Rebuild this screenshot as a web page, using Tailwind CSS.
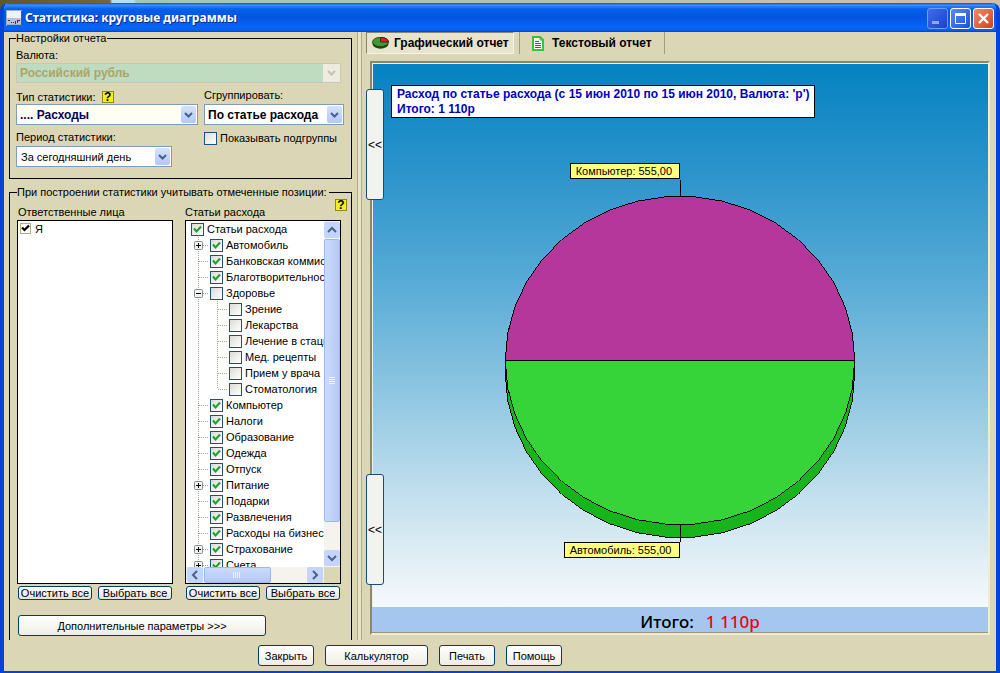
<!DOCTYPE html>
<html lang="ru">
<head>
    <meta charset="UTF-8">
    <meta name="viewport" content="width=device-width, initial-scale=1.0">
    <title>Статистика: круговые диаграммы</title>
    <script src="https://cdn.jsdelivr.net/npm/@tailwindcss/browser@4"></script>
</head>
<body class="h-screen overflow-hidden bg-[linear-gradient(90deg,#5c5a28_0,#6d6a38_110px,#b8dcf4_112px,#b8dcf4_134px,#a9c3b4_136px,#b4c4a8_60%,#cdbfa6_100%)] pt-[3px] font-['Liberation_Sans',Arial,sans-serif] text-[11px] leading-[14px] text-black">
    <div class="flex h-full flex-col overflow-hidden rounded-t-lg border-x-4 border-b-2 border-[#0442d8] bg-[#dbd6b6]">

        <!-- Title bar -->
        <header class="-mx-1 flex h-[29px] shrink-0 items-center gap-[3px] bg-[linear-gradient(180deg,#0a4fd0_0,#3a90fa_2px,#0560ea_6px,#0454e2_14px,#0566fb_24px,#0462f4_27px,#0340c4_29px)] pt-px pr-[6px] pl-[6px]">
            <svg class="size-4" viewBox="0 0 16 16" aria-hidden="true">
                <rect x="0" y="0" width="16" height="16" fill="#9fb0cc" />
                <rect x="1" y="1" width="14" height="7" fill="#eef2fa" />
                <rect x="1" y="8" width="14" height="6" fill="#b9c2d4" />
                <g shape-rendering="crispEdges" fill="#33384c">
                    <rect x="2" y="10" width="2" height="1" /><rect x="5" y="12" width="1" height="1" /><rect x="7" y="12" width="1" height="1" />
                    <rect x="9" y="11" width="1" height="3" /><rect x="11" y="10" width="1" height="3" /><rect x="12" y="10" width="2" height="1" />
                </g>
                <path d="M15.500 1v14.500H1" fill="none" stroke="#4c5670" />
            </svg>
            <h1 class="font-['Noto_Sans','Open_Sans',sans-serif] text-[12px] font-bold text-white [text-shadow:1px_1px_0_#0a2a80]">Статистика: круговые диаграммы</h1>
            <div class="ml-auto flex gap-[2px]">
                <button aria-label="Свернуть" class="size-[21px] rounded-[3px] border border-[#6f9cf6] bg-linear-to-br from-[#3f6ee8] to-[#1c3fcf]">
                    <svg class="size-[19px]" viewBox="0 0 19 19"><rect x="4" y="12" width="7" height="3" fill="#8fa6f2" /></svg>
                </button>
                <button aria-label="Развернуть" class="size-[21px] rounded-[3px] border border-white bg-linear-to-br from-[#5b8cf5] to-[#1c4fdc]">
                    <svg class="size-[19px]" viewBox="0 0 19 19"><path d="M4.500 5v9.500h10V5" fill="none" stroke="#fff" /><rect x="4" y="4" width="11" height="3" fill="#fff" /></svg>
                </button>
                <button aria-label="Закрыть окно" class="size-[21px] rounded-[3px] border border-white bg-linear-to-br from-[#ee8a68] to-[#d0401c]">
                    <svg class="size-[19px]" viewBox="0 0 19 19"><path d="M5 5l9 9M14 5l-9 9" stroke="#fff" stroke-width="2.400" /></svg>
                </button>
            </div>
        </header>

        <main class="flex min-h-0 flex-1">
            <!-- Settings -->
            <div class="flex w-[348px] shrink-0 flex-col gap-[7px] pl-[5px]">
                <fieldset class="h-[147px] shrink-0 border border-black pr-[7px] pl-[6px]">
                    <legend class="pr-px leading-[13px]">Настройки отчета</legend>
                    <label for="currency" class="mt-[3px] block leading-[15px]">Валюта:</label>
                    <div class="relative mr-[3px] flex">
                        <select id="currency" disabled class="h-5 w-full appearance-none border border-[#cbc7b4] bg-[#bfdcc1] px-[3px] text-[12px] font-bold text-[#aca468] opacity-100">
                            <option>Российский рубль</option>
                        </select>
                        <svg class="pointer-events-none absolute top-px right-px h-[18px] w-[17px] bg-[#eeece0]" viewBox="0 0 17 18"><path d="M5 7l3.500 3.500L12 7" fill="none" stroke="#c4c2b4" stroke-width="2" /></svg>
                    </div>
                    <div class="mt-[5px] flex gap-[6px]">
                        <div class="w-[182px]">
                            <div class="flex h-4 items-end gap-[6px]">
                                <label for="kind">Тип статистики:</label>
                                <button aria-label="Справка по типу" class="mb-px size-3 border border-[#8a8a20] bg-[#f4f01c] text-[12px] leading-[10px] font-bold">?</button>
                            </div>
                            <div class="relative flex">
                                <select id="kind" class="h-[21px] w-full appearance-none border border-[#7f9db9] bg-[#fffef2] px-[3px] text-[12px] font-bold text-[#000060]">
                                    <option>.... Расходы</option>
                                </select>
                                <svg class="pointer-events-none absolute top-0.5 right-0.5 h-[17px] w-[15px] rounded-xs bg-linear-to-b from-[#d6e2fd] to-[#b3c8f8]" viewBox="0 0 15 17"><path d="M4 7l3.500 3.500L11 7" fill="none" stroke="#45608c" stroke-width="2" /></svg>
                            </div>
                            <label for="period" class="mt-[5px] mb-[2px] block">Период статистики:</label>
                            <div class="relative flex w-[156px]">
                                <select id="period" class="h-[21px] w-full appearance-none border border-[#7f9db9] bg-white px-1">
                                    <option>За сегодняшний день</option>
                                </select>
                                <svg class="pointer-events-none absolute top-0.5 right-0.5 h-[17px] w-[15px] rounded-xs bg-linear-to-b from-[#d6e2fd] to-[#b3c8f8]" viewBox="0 0 15 17"><path d="M4 7l3.500 3.500L11 7" fill="none" stroke="#45608c" stroke-width="2" /></svg>
                            </div>
                        </div>
                        <div class="flex-1">
                            <label for="group" class="block h-4">Сгруппировать:</label>
                            <div class="relative flex">
                                <select id="group" class="h-[21px] w-full appearance-none border border-[#7f9db9] bg-white px-[3px] text-[12px] font-bold">
                                    <option>По статье расхода</option>
                                </select>
                                <svg class="pointer-events-none absolute top-0.5 right-0.5 h-[17px] w-[15px] rounded-xs bg-linear-to-b from-[#d6e2fd] to-[#b3c8f8]" viewBox="0 0 15 17"><path d="M4 7l3.500 3.500L11 7" fill="none" stroke="#45608c" stroke-width="2" /></svg>
                            </div>
                            <label class="mt-[6px] flex items-center gap-[3px] whitespace-nowrap">
                                <input type="checkbox" class="size-[13px] appearance-none border border-[#1c5180] bg-linear-to-br from-[#dcdcd7] to-white">
                                Показывать подгруппы
                            </label>
                        </div>
                    </div>
                </fieldset>

                <fieldset class="flex min-h-0 min-w-0 flex-1 flex-col border border-b-0 border-black pr-[10px] pl-[7px]">
                    <legend class="pr-[2px] leading-[13px]">При построении статистики учитывать отмеченные позиции:</legend>
                    <div class="flex h-full min-h-0 flex-col">
                        <div class="flex min-h-0 flex-1 gap-[12px]">
                            <section class="flex w-[156px] flex-col pt-[6px]">
                                <h2 class="pl-px">Ответственные лица</h2>
                                <div class="mt-px min-h-0 flex-1 border border-black bg-white p-[2px]">
                                    <label class="flex h-[11px] items-center gap-1">
                                        <span class="grid">
                                            <input type="checkbox" checked class="peer col-start-1 row-start-1 size-[11px] appearance-none border border-[#b8a888] bg-white">
                                            <svg class="pointer-events-none invisible col-start-1 row-start-1 size-[11px] peer-checked:visible" viewBox="0 0 11 11"><path d="M2 4.500l2.500 2.500L9 2.500" fill="none" stroke="#000" stroke-width="2.200" /></svg>
                                        </span>
                                        Я
                                    </label>
                                </div>
                                <div class="flex gap-[6px] p-px pt-[2px]">
                                    <button class="h-[14px] flex-1 overflow-hidden rounded-[3px] border border-[#003c74] bg-linear-to-b from-white to-[#e4e2d8] leading-[13px] whitespace-nowrap">Очистить все</button>
                                    <button class="h-[14px] flex-1 overflow-hidden rounded-[3px] border border-[#003c74] bg-linear-to-b from-white to-[#e4e2d8] leading-[13px] whitespace-nowrap">Выбрать все</button>
                                </div>
                            </section>
                            <section class="flex min-w-0 flex-1 flex-col pt-[6px]">
                                <div class="flex h-[14px] items-start justify-between">
                                    <h2>Статьи расхода</h2>
                                    <button aria-label="Справка по статьям" class="-mt-[6px] -mr-[6px] size-3 border border-[#8a8a20] bg-[#f4f01c] text-[12px] leading-[10px] font-bold">?</button>
                                </div>
                                <div class="mt-px grid min-h-0 flex-1 grid-cols-[minmax(0,1fr)_16px] grid-rows-[minmax(0,1fr)_16px] border border-black bg-white">
                                    <ul id="tree" class="overflow-hidden pl-[5px]"></ul>
                                    <div class="flex flex-col bg-[#f4f3ee] py-px" aria-hidden="true">
                                        <svg class="size-4 rounded-xs bg-[#c4d5fb]" viewBox="0 0 16 16"><path d="M4 10l4-4 4 4" fill="none" stroke="#4d6185" stroke-width="2" /></svg>
                                        <div class="mt-px flex flex-[284] items-center justify-center rounded-xs border border-[#9db8ee] bg-linear-to-r from-[#cbdafd] to-[#b5c9f7]">
                                            <svg class="h-2 w-1.5" viewBox="0 0 6 8"><path d="M0 .5h6M0 2.500h6M0 4.500h6M0 6.500h6" stroke="#eef4fe" /></svg>
                                        </div>
                                        <div class="flex-[28]"></div>
                                        <svg class="size-4 rounded-xs bg-[#c4d5fb]" viewBox="0 0 16 16"><path d="M4 6l4 4 4-4" fill="none" stroke="#4d6185" stroke-width="2" /></svg>
                                    </div>
                                    <div class="flex bg-[#f4f3ee] px-px" aria-hidden="true">
                                        <svg class="size-4 rounded-xs bg-[#c4d5fb]" viewBox="0 0 16 16"><path d="M10 4L6 8l4 4" fill="none" stroke="#4d6185" stroke-width="2" /></svg>
                                        <div class="ml-px flex flex-[66] items-center justify-center rounded-xs border border-[#9db8ee] bg-linear-to-b from-[#cbdafd] to-[#b5c9f7]">
                                            <svg class="h-1.5 w-2" viewBox="0 0 8 6"><path d="M.5 0v6M2.500 0v6M4.500 0v6M6.500 0v6" stroke="#eef4fe" /></svg>
                                        </div>
                                        <div class="flex-[37]"></div>
                                        <svg class="size-4 rounded-xs bg-[#c4d5fb]" viewBox="0 0 16 16"><path d="M6 4l4 4-4 4" fill="none" stroke="#4d6185" stroke-width="2" /></svg>
                                    </div>
                                    <div class="bg-[#dbd6b6]"></div>
                                </div>
                                <div class="flex gap-[6px] p-px pt-[2px]">
                                    <button class="h-[14px] flex-1 overflow-hidden rounded-[3px] border border-[#003c74] bg-linear-to-b from-white to-[#e4e2d8] leading-[13px] whitespace-nowrap">Очистить все</button>
                                    <button class="h-[14px] flex-1 overflow-hidden rounded-[3px] border border-[#003c74] bg-linear-to-b from-white to-[#e4e2d8] leading-[13px] whitespace-nowrap">Выбрать все</button>
                                </div>
                            </section>
                        </div>
                        <button class="mt-[14px] mb-1 ml-px h-[21px] w-[248px] shrink-0 rounded-[3px] border border-[#003c74] bg-linear-to-b from-white to-[#efede4]">Дополнительные параметры &gt;&gt;&gt;</button>
                    </div>
                </fieldset>
            </div>

            <!-- Splitter -->
            <div class="mx-[5px] w-[5px] shrink-0 border-x border-[#b5ab78] bg-[#e6e2cc]"></div>

            <!-- Report -->
            <div class="flex min-w-0 flex-1 flex-col pr-[6px] pb-[5px]">
                <div role="tablist" class="flex h-[22px] text-[12px] font-bold">
                    <button role="tab" aria-selected="true" class="-ml-px flex w-[148px] items-center gap-[5px] border border-t-[#8a8468] border-r-[#f6f3e2] border-b-[#f6f3e2] border-l-[#8a8468] bg-[#e8e3cc] pl-[5px] whitespace-nowrap">
                        <svg class="h-3 w-[17px] shrink-0" viewBox="0 0 17 12">
                            <ellipse cx="8.500" cy="7" rx="8" ry="4.700" fill="#1c4a14" />
                            <ellipse cx="8.500" cy="5" rx="8" ry="4.700" fill="#3f9a34" stroke="#1e3a14" stroke-width=".8" />
                            <path d="M8.500 5V.3A8 4.700 0 0 1 16.500 5z" fill="#e02020" stroke="#401010" stroke-width=".8" />
                        </svg>
                        Графический отчет
                    </button>
                    <button role="tab" aria-selected="false" class="ml-[5px] flex w-[146px] items-center gap-[8px] border-x border-[#a39c7c] pl-[12px] whitespace-nowrap">
                        <svg class="h-[15px] w-3 shrink-0" viewBox="0 0 12 15">
                            <path d="M1 1h7l3 3v10H1z" fill="#fff" stroke="#34c43c" stroke-width="2" />
                            <path d="M8 1v3h3" fill="none" stroke="#34c43c" />
                            <path d="M3 5.500h4M3 7.500h6M3 9.500h6M3 11.500h6" stroke="#555" />
                        </svg>
                        Текстовый отчет
                    </button>
                </div>
                <div class="relative mt-[7px] ml-[3px] flex min-h-0 flex-1 flex-col border-2 border-t-[#8d8764] border-r-[#efebd4] border-b-[#efebd4] border-l-[#8d8764]">
                    <div class="relative min-h-0 flex-1 border-t border-l border-[#e9efee] bg-[linear-gradient(180deg,#0482c1_0,#2a93cb_19%,#57abd6_40%,#a3d0e6_68%,#d4e8f2_86%,#f5f9fc_100%)]">
                        <svg class="size-full" viewBox="0 0 616 543" role="img" aria-label="Круговая диаграмма расходов">
                            <g stroke="#000" shape-rendering="crispEdges">
                                <polygon id="rim" fill="#18b41c" />
                                <polygon id="sliceTop" fill="#b5379b" />
                                <polygon id="sliceBottom" fill="#36d339" />
                                <path d="M307.500 116v16M307.500 461v17" />
                                <rect x="197.500" y="99.500" width="109" height="15" fill="#ffff80" />
                                <rect x="191.500" y="478.500" width="115" height="15" fill="#ffff80" />
                            </g>
                            <text x="203" y="111">Компьютер: 555,00</text>
                            <text x="197" y="490">Автомобиль: 555,00</text>
                        </svg>
                        <div class="absolute top-[21px] left-[18px] border border-black bg-white px-[4px] pt-px pl-[5px] text-[12px] leading-[15px] font-bold whitespace-nowrap text-[#0000c0]">
                            <p>Расход по статье расхода (с 15 июн 2010 по 15 июн 2010, Валюта: 'р')</p>
                            <p>Итого: 1 110р</p>
                        </div>
                    </div>
                    <div class="flex h-[26px] shrink-0 items-center justify-center gap-[12px] border-b border-[#9a9474] bg-[#a5c7ef] pt-1 pr-px pl-[41px] font-['Noto_Sans',sans-serif] text-[17px] leading-none">
                        <span class="font-medium">Итого:</span>
                        <span class="font-medium text-[#e00818]">1 110р</span>
                    </div>
                    <button class="absolute top-[26px] -left-[6px] h-[111px] w-[18px] rounded-[3px] border border-[#1c4a78] bg-[#f2f2ee] text-[12px]">&lt;&lt;</button>
                    <button class="absolute bottom-[48px] -left-[6px] h-[111px] w-[18px] rounded-[3px] border border-[#1c4a78] bg-[#f2f2ee] text-[12px]">&lt;&lt;</button>
                </div>
            </div>
        </main>

        <footer class="flex h-[31px] shrink-0 items-center gap-[11px] pl-[254px]">
            <button class="h-[21px] w-14 rounded-[3px] border border-[#003c74] bg-linear-to-b from-white to-[#efede4]">Закрыть</button>
            <button class="h-[21px] w-[103px] rounded-[3px] border border-[#003c74] bg-linear-to-b from-white to-[#efede4]">Калькулятор</button>
            <button class="h-[21px] w-14 rounded-[3px] border border-[#003c74] bg-linear-to-b from-white to-[#efede4]">Печать</button>
            <button class="h-[21px] w-14 rounded-[3px] border border-[#003c74] bg-linear-to-b from-white to-[#efede4]">Помощь</button>
        </footer>
    </div>

    <script>
        // level, name, checked, expander ('+', '-' or none)
        const items = [
            [0, 'Статьи расхода', true],
            [1, 'Автомобиль', true, '+'],
            [1, 'Банковская коммиссия', true],
            [1, 'Благотворительность', true],
            [1, 'Здоровье', false, '-'],
            [2, 'Зрение', false],
            [2, 'Лекарства', false],
            [2, 'Лечение в стационаре', false],
            [2, 'Мед. рецепты', false],
            [2, 'Прием у врача', false],
            [2, 'Стоматология', false],
            [1, 'Компьютер', true],
            [1, 'Налоги', true],
            [1, 'Образование', true],
            [1, 'Одежда', true],
            [1, 'Отпуск', true],
            [1, 'Питание', true, '+'],
            [1, 'Подарки', true],
            [1, 'Развлечения', true],
            [1, 'Расходы на бизнес', true],
            [1, 'Страхование', true, '+'],
            [1, 'Счета', true, '+']
        ];

        // One indent cell of the tree: dotted guides and the expander box
        function guide(own, last, expander) {
            let d = last ? 'M7.5 0v8' : 'M7.5 0v16';
            if (own) d += 'M8 8.5h10';
            let box = '';
            if (expander) {
                box = `<rect x="3.5" y="4.5" width="8" height="8" rx="1" fill="#f2f1ea" stroke="#7b8ba0" />
                    <path d="M5 8.5h5${expander === '+' ? 'M7.5 6v5' : ''}" stroke="#000" />`;
            }
            return `<svg class="h-4 w-[19px] shrink-0" viewBox="0 0 19 16"><path d="${d}" stroke="#a8a488" stroke-dasharray="1 1" />${box}</svg>`;
        }

        document.getElementById('tree').innerHTML = items.map(([level, name, checked, expander], i) => {
            let cells = '';
            for (let n = 1; n <= level; n++) {
                const own = n === level;
                const last = own && level === 2 && items[i + 1][0] < 2;
                cells += guide(own, last, own ? expander : '');
            }
            return `<li class="flex h-4 items-center whitespace-nowrap">${cells}
                <label class="flex items-center gap-[3px]">
                    <span class="grid">
                        <input type="checkbox" ${checked ? 'checked' : ''} class="peer col-start-1 row-start-1 size-[13px] appearance-none border border-[#1c5180] bg-linear-to-br from-[#dcdcd7] to-white">
                        <svg class="pointer-events-none invisible col-start-1 row-start-1 size-[13px] peer-checked:visible" viewBox="0 0 13 13"><path d="M3 5.500l2.500 3L10 3.500" fill="none" stroke="#21a121" stroke-width="2" /></svg>
                    </span>
                    ${name}
                </label>
            </li>`;
        }).join('');

        // Pie outline, 19 segments for each half
        function arc(from, to, dy) {
            const points = [];
            for (let i = 0; i <= 19; i++) {
                const a = (from + (to - from) * i / 19) * Math.PI / 180;
                points.push(`${(307.5 + 175 * Math.cos(a)).toFixed(1)},${(296.5 + dy + 164.5 * Math.sin(a)).toFixed(1)}`);
            }
            return points.join(' ');
        }
        document.getElementById('sliceTop').setAttribute('points', arc(180, 360, 0));
        document.getElementById('sliceBottom').setAttribute('points', arc(0, 180, 0));
        document.getElementById('rim').setAttribute('points', arc(0, 180, 13) + ' ' + arc(180, 0, 0));
    </script>
</body>
</html>
